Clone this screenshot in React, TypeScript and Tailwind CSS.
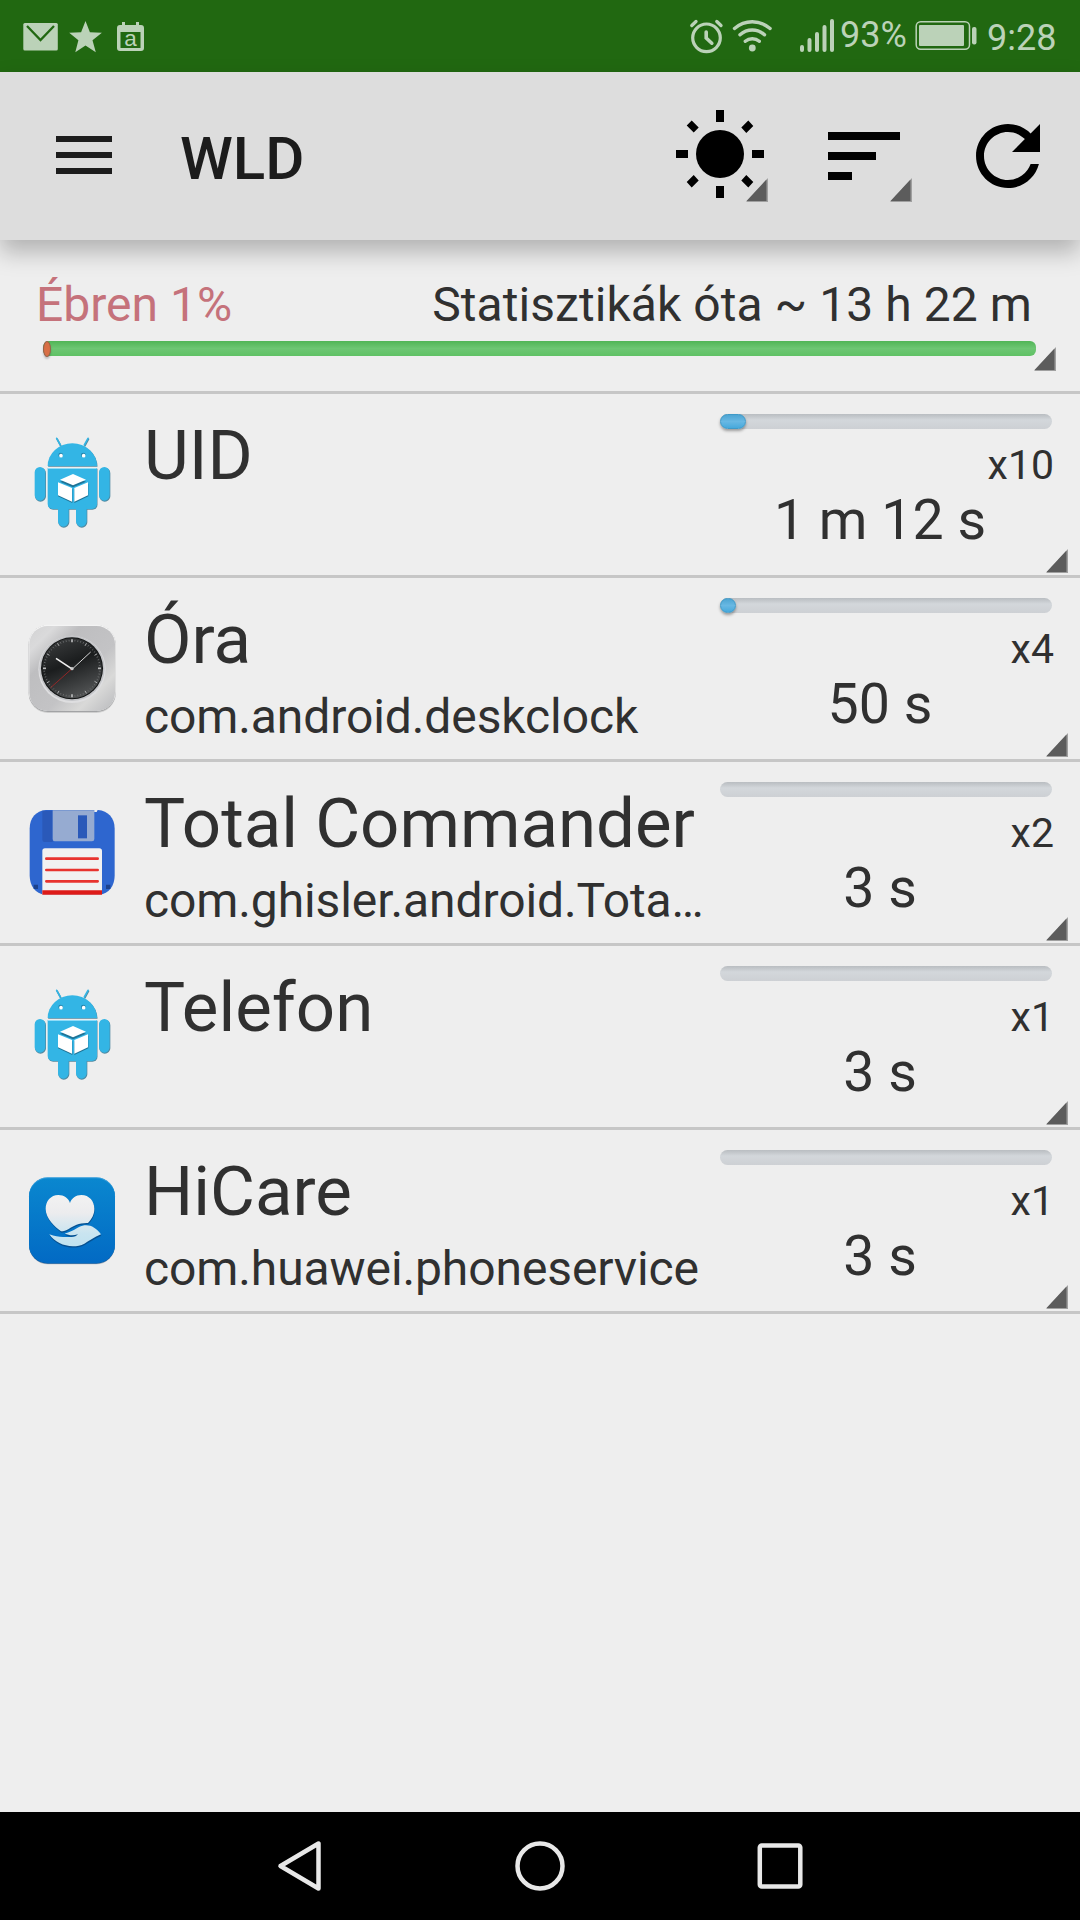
import type { ReactNode } from 'react';

function Corner({ className = '' }: { className?: string }) {
  return (
    <svg className={className} width="22" height="24" viewBox="0 0 22 24">
      <path d="M0 24 22 0V24Z" fill="#a0a0a0" />
      <path d="M0.500 23 20.500 1.500V23Z" fill="#5c5c5c" />
    </svg>
  );
}

function AndroidIcon() {
  return (
    <svg width="88" height="100" viewBox="54 80 264 300">
      <g fill="#2b6f8c" stroke="#2b6f8c" opacity="0.8" transform="translate(1.5 2.5)">
        <path d="M113 173a74 68 0 0 1 148 0Z" stroke="none" />
        <path d="M113 179h148v108a15 15 0 0 1-15 15H128a15 15 0 0 1-15-15Z" stroke="none" />
        <path d="M90 192v69M283 192v69M160 300v39M214 300v39" strokeWidth="33" strokeLinecap="round" />
        <path d="m140 90 11 20M234 90l-11 20" strokeWidth="5" strokeLinecap="round" />
      </g>
      <g fill="#33b5e5" stroke="#33b5e5">
        <path d="M113 173a74 68 0 0 1 148 0Z" stroke="none" />
        <path d="M113 179h148v108a15 15 0 0 1-15 15H128a15 15 0 0 1-15-15Z" stroke="none" />
        <path d="M90 192v69M283 192v69M160 300v39M214 300v39" strokeWidth="32" strokeLinecap="round" />
        <path d="m140 90 11 20M234 90l-11 20" strokeWidth="5" strokeLinecap="round" />
      </g>
      <path d="M114 180.500h146" stroke="#8fdcf8" strokeWidth="3" />
      <circle cx="152" cy="140" r="7" fill="#2384ab" />
      <circle cx="220" cy="140" r="7" fill="#2384ab" />
      <circle cx="153" cy="142" r="5.500" fill="#fff" />
      <circle cx="221" cy="142" r="5.500" fill="#fff" />
      <path d="m150 220 39-15 39 15-39 17ZM144 226l43 17v41l-43-20ZM235 226l-42 17v41l42-20Z" fill="#1f7396" />
      <path d="m150 214 39-17 39 17-39 17ZM144 222l42 17v41l-42-19ZM234 222l-41 17v41l41-19Z" fill="#fff" />
    </svg>
  );
}

function ClockIcon() {
  const ticks = Array.from({ length: 60 }, (_, i) => i);
  return (
    <svg width="88" height="100" viewBox="54 56 264 300">
      <defs>
        <linearGradient id="metal" x1="0" y1="0" x2="1" y2="1">
          <stop offset="0" stopColor="#d2d2d3" />
          <stop offset="0.150" stopColor="#dadadb" />
          <stop offset="0.300" stopColor="#bebec0" />
          <stop offset="0.600" stopColor="#c3c3c5" />
          <stop offset="0.780" stopColor="#d9d9d8" />
          <stop offset="1" stopColor="#b8b9bc" />
        </linearGradient>
        <linearGradient id="dial" x1="0.200" y1="0" x2="0.600" y2="1">
          <stop offset="0" stopColor="#3a3c3d" />
          <stop offset="0.450" stopColor="#1b1d1e" />
          <stop offset="1" stopColor="#525455" />
        </linearGradient>
      </defs>
      <rect x="56" y="77" width="261" height="261" rx="58" fill="#cfcfcf" />
      <rect x="56" y="74" width="261" height="261" rx="58" fill="#a2a3a5" />
      <rect x="56" y="73" width="261" height="259" rx="58" fill="#f4f4f4" />
      <rect x="58" y="77" width="257" height="255" rx="55" fill="url(#metal)" />
      <circle cx="186" cy="207" r="101" fill="#dedee0" />
      <circle cx="186" cy="204" r="98" fill="#c4c5c8" />
      <circle cx="186" cy="204" r="93" fill="#121414" />
      <circle cx="186" cy="204" r="90" fill="url(#dial)" />
      {ticks.map((i) => (
        <path
          key={i}
          d={i % 5 === 0 ? 'M186 117v9' : 'M186 118v5'}
          stroke={i % 5 === 0 ? '#b9babb' : '#6a6c6d'}
          strokeWidth={i % 15 === 0 ? 5 : 2.5}
          transform={`rotate(${i * 6} 186 204)`}
        />
      ))}
      <path d="m186 205-64 57" stroke="#a82424" strokeWidth="2.500" />
      <path d="m187 206 55-51" stroke="#d4d4d4" strokeWidth="3" />
      <path d="m188 207-50-33" stroke="#f0f0f0" strokeWidth="5" />
      <circle cx="186" cy="205" r="5" fill="#c9c9c9" />
    </svg>
  );
}

function FloppyIcon() {
  return (
    <svg width="88" height="100" viewBox="54 608 264 300">
      <path d="M108 629h156c30 2 50 24 50 56v140c0 33-18 55-45 58H104c-27-3-45-25-45-58V685c0-32 19-54 49-56Z" fill="#2e66cf" />
      <path d="M97 631h31v94h-24q-7 0-7-7Z" fill="#2a59b9" />
      <path d="M128 630h125v86q0 7-7 7H134q-6 0-6-7Z" fill="#96abd1" />
      <path d="M253 627h11l-4 8h-7Z" fill="#eee" />
      <path d="M204 645h27v69h-27Z" fill="#2a59b9" />
      <path d="M71 853h13v13H71ZM288 853h13v13h-13Z" fill="#1d428c" />
      <path d="M97 883V752q0-8 8-8h163q8 0 8 8v131Z" fill="#f1f1f1" />
      <path d="M109 775h154M109 809h154M109 843h154" stroke="#e8332f" strokeWidth="8" strokeLinecap="round" />
      <path d="M97 870h179v13H97Z" fill="#dd1b18" />
    </svg>
  );
}

function HiCareIcon() {
  return (
    <svg width="88" height="100" viewBox="54 632 264 300">
      <defs>
        <linearGradient id="blue" x1="0" y1="0" x2="0" y2="1">
          <stop offset="0" stopColor="#0a87cf" />
          <stop offset="1" stopColor="#026ac4" />
        </linearGradient>
        <linearGradient id="care" gradientUnits="userSpaceOnUse" x1="0" y1="704" x2="0" y2="858">
          <stop offset="0" stopColor="#f2f2f2" />
          <stop offset="0.350" stopColor="#ececee" />
          <stop offset="0.750" stopColor="#c9e4f0" />
          <stop offset="1" stopColor="#c0e2f0" />
        </linearGradient>
        <g id="careShape">
          <path d="M180 728c4-14 18-24 34-24 24 0 39 19 39 41 0 18-8 31-19 43-26-1-42 8-58 18-8 5-15 7-23 7-17-13-46-37-46-68 0-22 15-41 38-41 17 0 31 10 35 24Z" />
          <path d="M118 822c18 7 34 9 48 8h19c9 0 15-3 19-8-14 4-25 5-40-3 18-3 28-11 43-19 25-12 49-2 66 22-21 9-35 19-50 28-34 17-84 5-105-28Z" />
        </g>
      </defs>
      <rect x="57" y="656" width="258" height="256" rx="56" fill="#b6b9bd" />
      <rect x="57" y="652" width="258" height="258" rx="56" fill="#0b5ca6" />
      <rect x="57" y="651" width="258" height="255" rx="56" fill="#3ba3de" />
      <rect x="57" y="654" width="258" height="254" rx="56" fill="url(#blue)" />
      <use href="#careShape" fill="#07457f" opacity="0.750" transform="translate(1 4)" />
      <use href="#careShape" fill="url(#care)" />
    </svg>
  );
}

type Entry = {
  name: string;
  pkg?: string;
  count: string;
  time: string;
  fill: number;
  icon: ReactNode;
};

const entries: Entry[] = [
  { name: 'UID', count: 'x10', time: '1 m 12 s', fill: 26, icon: <AndroidIcon /> },
  { name: 'Óra', pkg: 'com.android.deskclock', count: 'x4', time: '50 s', fill: 16, icon: <ClockIcon /> },
  { name: 'Total Commander', pkg: 'com.ghisler.android.Tota…', count: 'x2', time: '3 s', fill: 0, icon: <FloppyIcon /> },
  { name: 'Telefon', count: 'x1', time: '3 s', fill: 0, icon: <AndroidIcon /> },
  { name: 'HiCare', pkg: 'com.huawei.phoneservice', count: 'x1', time: '3 s', fill: 0, icon: <HiCareIcon /> },
];

function Row({ entry }: { entry: Entry }) {
  return (
    <li className="relative flex h-[184px] border-b-[3px] border-[#c6c6c6] pl-7">
      <div className="w-[88px] shrink-0 pt-[40.67px]">{entry.icon}</div>
      <div className="ml-7 w-[564px] shrink-0 pt-[21px]">
        <div className="text-[69px] leading-[81px] whitespace-nowrap">{entry.name}</div>
        {entry.pkg && (
          <div className="mt-[9px] text-[48px] leading-[56px] tracking-[-0.1px] whitespace-nowrap">{entry.pkg}</div>
        )}
      </div>
      <div className="w-[344px] shrink-0 pt-5">
        <div className="ml-[12px] h-[15px] rounded-full bg-linear-to-b from-[#b9bdc1] via-[#d3d7db] via-40% to-[#cdd0d4]">
          {entry.fill > 0 && (
            <div
              className="h-[15px] rounded-full border border-[#3f9ac8] bg-linear-to-b from-[#4da5d3] via-[#68b8e3] to-[#46a9dc] shadow-[0_2px_3px_rgba(0,0,0,0.35)]"
              style={{ width: entry.fill }}
            />
          )}
        </div>
        <div className="mt-[11px] -mr-[2px] text-right text-[41px] leading-[50px]">{entry.count}</div>
        <div className="-mt-[2px] text-center text-[55.5px] leading-[66px]">{entry.time}</div>
      </div>
      <Corner className="absolute right-[12.5px] bottom-[2px]" />
    </li>
  );
}

function StatusBar() {
  return (
    <div className="flex h-[72px] items-start bg-[#216811] text-[36px] text-[#bbd2b8]">
      <svg className="ml-[23px]" width="35" height="72" viewBox="23 0 35 72">
        <rect x="23.300" y="23" width="34.500" height="27.500" rx="1.500" fill="#bbd2b8" />
        <path d="m27 26 13.500 14L54 26" fill="none" stroke="#216811" strokeWidth="2.300" />
      </svg>
      <svg className="ml-[11px]" width="33" height="72" viewBox="69 0 33 72">
        <path d="m85.500 21 4.400 11.200 12 .6-9.400 7.500 3.300 11.900-10.300-6.700-10.200 6.700 3.100-11.900-9.200-7.500 11.900-.6Z" fill="#bbd2b8" />
      </svg>
      <svg className="ml-[15px]" width="27" height="72" viewBox="117 0 27 72">
        <path d="M122 22h3v3h11v-3h3v3h2q3 0 3 3v20q0 3-3 3h-21q-3 0-3-3V28q0-3 3-3h2ZM120.500 32v16h20V32Z" fill="#bbd2b8" fillRule="evenodd" />
        <text x="130.500" y="46" textAnchor="middle" fontSize="22.500" fontFamily="Liberation Sans, sans-serif" fill="#bbd2b8">a</text>
      </svg>
      <svg className="ml-[545px]" width="36" height="72" viewBox="689 0 36 72" fill="none" stroke="#bbd2b8" strokeLinecap="round">
        <circle cx="706.500" cy="37.800" r="13.800" strokeWidth="3.200" />
        <path d="M706.200 32v6l5.600 5.200" strokeWidth="3.600" />
        <path d="m691.800 25.500 4.200-4M721 25.500l-4.200-4" strokeWidth="3.300" />
      </svg>
      <svg className="ml-[6px]" width="43" height="72" viewBox="731 0 43 72" fill="none" stroke="#bbd2b8" strokeLinecap="round" strokeWidth="3.400">
        <circle cx="752.300" cy="48" r="3.400" fill="#bbd2b8" stroke="none" />
        <path d="M734.500 28.500c10.500-9 25-9 35.600 0M740 34.800c7-6.400 17.500-6.400 24.500 0M745.300 41.300c4-3.500 10-3.500 14 0" />
      </svg>
      <svg className="ml-[23px]" width="40" height="72" viewBox="797 0 40 72" stroke="#bbd2b8" strokeLinecap="round" strokeWidth="4">
        <path d="M802 47v3M809.500 40v10M817 34v16M824.500 27v23M832 21v29" />
      </svg>
      <span className="ml-[3px] mt-[14px] w-[66px] leading-[42px] whitespace-nowrap">93%</span>
      <svg className="ml-[7px]" width="65" height="72" viewBox="913 0 65 72" fill="#bbd2b8">
        <rect x="916.200" y="21.800" width="53.300" height="27.400" rx="4.500" fill="none" stroke="#bbd2b8" strokeWidth="1.500" />
        <rect x="919" y="25" width="45" height="21" rx="1" />
        <rect x="972" y="27" width="4.500" height="17.500" rx="2" />
      </svg>
      <span className="ml-[9px] mt-[17px] leading-[42px] whitespace-nowrap">9:28</span>
    </div>
  );
}

function AppBar() {
  return (
    <div className="relative h-[168px] bg-[#ddd] shadow-[0_12px_22px_rgba(0,0,0,0.25)]">
      <div className="flex h-full items-start">
        <svg className="ml-14" width="56" height="168" viewBox="0 0 56 168" fill="#1c1c1c">
          <path d="M0 64h56v6H0ZM0 80h56v6H0ZM0 96h56v6H0Z" />
        </svg>
        <h1 className="ml-[68px] mt-[52px] w-[490px] text-[60px] leading-[70px] font-medium text-[#1c1c1c]">WLD</h1>
        <svg width="76" height="168" viewBox="670 72 76 168" overflow="visible">
          <circle cx="720" cy="154" r="24" />
          <path d="M716 110h8v12h-8ZM716 186h8v12h-8ZM676 150h12v8h-12ZM752 150h12v8h-12Z" />
          <path d="m691.700 120.500 7 7-5 5-7-7ZM748.300 120.500l-7 7 5 5.500 7-7ZM691.700 187.500l7-7-5-5.500-7 7ZM748.300 187.500l-7-7 5-5.500 7 7Z" />
        </svg>
        <Corner className="mt-[106px]" />
        <svg className="ml-[60px]" width="62" height="168" viewBox="828 72 62 168" overflow="visible">
          <path d="M828 132h72v8h-72ZM828 152h48v8h-48ZM828 172h24v8h-24Z" />
        </svg>
        <Corner className="mt-[106px]" />
        <svg className="ml-[48px] mt-9" width="96" height="96" viewBox="0 0 24 24">
          <path d="M17.650 6.350A7.958 7.958 0 0 0 12 4c-4.420 0-7.990 3.580-7.990 8s3.570 8 7.990 8c3.730 0 6.840-2.550 7.730-6h-2.080A5.990 5.990 0 0 1 12 18c-3.310 0-6-2.690-6-6s2.690-6 6-6c1.660 0 3.140.69 4.220 1.780L13 11h7V4l-2.350 2.350z" />
        </svg>
      </div>
    </div>
  );
}

export default function App() {
  return (
    <div className="flex h-[1920px] w-[1080px] flex-col overflow-hidden bg-[#eee] font-['Roboto',sans-serif] text-[#303030]">
      <StatusBar />
      <AppBar />

      <div className="relative h-[154px] shrink-0 border-b-[3px] border-[#c6c6c6] pt-[37px]">
        <div className="flex justify-between pr-[48px] pl-[36px] text-[48px] leading-[56px]">
          <span className="text-[#c5727b]">Ébren 1%</span>
          <span className="tracking-[0.06px]">Statisztikák óta ~ 13 h 22 m</span>
        </div>
        <div className="mt-[8px] ml-[43px] h-[15px] w-[993px] rounded-[6px] bg-linear-to-b from-[#50b556] via-[#6dc673] to-[#5fc164]">
          <div className="h-[16px] w-[8px] rounded-[50%] border border-[#96624a] bg-[#d86f45] shadow-[0_2px_2px_rgba(0,0,0,0.2)]" />
        </div>
        <Corner className="absolute right-[24px] bottom-[20px]" />
      </div>

      <ul className="flex-1">
        {entries.map((entry) => (
          <Row key={entry.name} entry={entry} />
        ))}
      </ul>

      <div className="flex h-[108px] items-center justify-center gap-[188px] bg-black">
        <svg width="50" height="54" viewBox="275 1839 50 54" fill="none" stroke="#e8e8e8" strokeWidth="4.500" strokeLinejoin="round">
          <path d="M280.500 1866 318.500 1843.500V1888.500Z" />
        </svg>
        <svg width="54" height="54" viewBox="0 0 54 54" fill="none" stroke="#e8e8e8" strokeWidth="4.500">
          <circle cx="27" cy="27" r="22.500" />
        </svg>
        <svg width="50" height="54" viewBox="755 1839 50 54" fill="none" stroke="#e8e8e8" strokeWidth="4.500">
          <rect x="759.800" y="1845.500" width="40.500" height="41" rx="2" />
        </svg>
      </div>
    </div>
  );
}
